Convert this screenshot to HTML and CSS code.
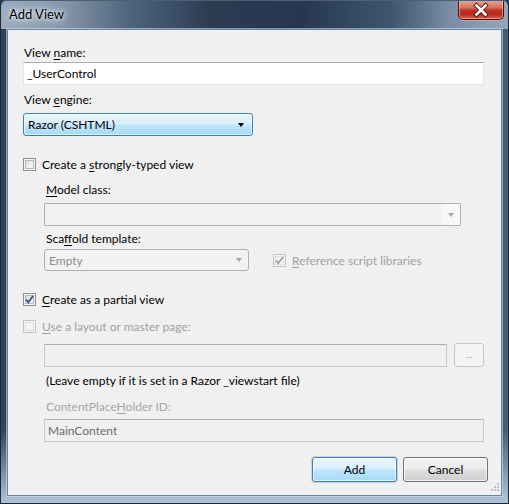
FILE: index.html
```html
<!DOCTYPE html>
<html>
<head>
<meta charset="utf-8">
<link rel="stylesheet" href="styles.css">
</head>
<body>
<div class="window">
  <div class="titlebar">
    <span class="title">Add View</span>
    <div class="close">
      <svg width="44" height="18" viewBox="0 0 44 18">
        <path d="M17.5 4.5 L26.5 13.5 M26.5 4.5 L17.5 13.5" stroke="#5a1a12" stroke-width="4.5" stroke-linecap="square" fill="none"/>
        <path d="M17.5 4.5 L26.5 13.5 M26.5 4.5 L17.5 13.5" stroke="#ffffff" stroke-width="2.6" stroke-linecap="square" fill="none"/>
      </svg>
    </div>
  </div>
  <div class="frame">
    <div class="client">
      <div class="label mt15">View <u>n</u>ame:</div>
      <div class="textbox mt2">_UserControl</div>
      <div class="label mt7">View <u>e</u>ngine:</div>
      <div class="combo hot mt6 w-engine"><span>Razor (CSHTML)</span><span class="arrow"></span></div>

      <div class="check-row mt21">
        <span class="cb"></span><span>Create a <u>s</u>trongly-typed view</span>
      </div>
      <div class="indent">
        <div class="label mt10"><u>M</u>odel class:</div>
        <div class="combo disabled mt6 w-model"><span></span><span class="drop"><span class="arrow grey"></span></span></div>
        <div class="label mt5">Sca<u>f</u>fold template:</div>
        <div class="row mt3">
          <div class="combo disabled small w-scaffold"><span class="greytext">Empty</span><span class="arrow grey"></span></div>
          <div class="check-row disabled-row ref">
            <span class="cb disabled checked">
              <svg width="11" height="11" viewBox="0 0 11 11"><path d="M2 5.5 L4.3 8.3 L9 2" stroke="#9a9a9a" stroke-width="1.6" fill="none"/></svg>
            </span>
            <span><u>R</u>eference script libraries</span>
          </div>
        </div>
      </div>

      <div class="check-row mt21">
        <span class="cb checked">
          <svg width="11" height="11" viewBox="0 0 11 11"><path d="M2 5.5 L4.3 8.3 L9 2" stroke="#3b4f83" stroke-width="1.8" fill="none"/></svg>
        </span>
        <span><u>C</u>reate as a partial view</span>
      </div>
      <div class="check-row disabled-row mt12">
        <span class="cb disabled"></span><span><u>U</u>se a layout or master page:</span>
      </div>
      <div class="indent">
        <div class="row browse-row mt9">
          <div class="textbox disabled w-layout"></div>
          <div class="btn-browse">...</div>
        </div>
        <div class="label note mt6">(Leave empty if it is set in a Razor _viewstart file)</div>
        <div class="label note greytext2 mt11">ContentPlace<u>H</u>older ID:</div>
        <div class="textbox disabled ro mt5">MainContent</div>
      </div>

      <div class="buttons mt15">
        <div class="btn default">Add</div>
        <div class="btn">Cancel</div>
      </div>
      <svg class="grip" width="12" height="12" viewBox="0 0 12 12">
        <g fill="#b8c2cc">
          <rect x="9" y="1" width="2" height="2"/>
          <rect x="6" y="4" width="2" height="2"/><rect x="9" y="4" width="2" height="2"/>
          <rect x="3" y="7" width="2" height="2"/><rect x="6" y="7" width="2" height="2"/><rect x="9" y="7" width="2" height="2"/>
        </g>
      </svg>
    </div>
  </div>
</div>
</body>
</html>
```
FILE: styles.css
```css
* { box-sizing: border-box; }
html, body { margin: 0; padding: 0; }
body {
  width: 509px;
  height: 504px;
  overflow: hidden;
  background: #2b3e54;
  font-family: Lato, "Noto Sans", sans-serif;
  font-size: 12px;
  color: #000;
}
.window {
  width: 509px;
  height: 504px;
  display: flex;
  flex-direction: column;
  border: 1px solid #1c2836;
  border-top-color: #4d5f72;
  border-radius: 6px 6px 0 0;
  overflow: hidden;
  background: linear-gradient(to right, #9aabbd 0px, #8698ab 60px, #4e647c 130px, #2a3c52 210px, #263850 300px, #3e556f 390px, #7a8fa5 450px, #95a7b9 509px);
}
.titlebar {
  height: 28px;
  display: flex;
  justify-content: space-between;
  align-items: flex-start;
  flex-shrink: 0;
}
.title {
  margin: 6px 0 0 8px;
  font-size: 13px;
  line-height: 15px;
  color: #000;
  text-shadow: 0 0 6px #e8eef4, 0 0 10px #dfe7ef, 0 0 3px #e8eef4;
}
.close {
  width: 46px;
  height: 20px;
  margin: -1px 4px 0 0;
  border: 1px solid #4a1510;
  border-top: none;
  border-radius: 0 0 5px 5px;
  background: linear-gradient(#e9a99a 0%, #d5705e 40%, #c0301f 55%, #b8281a 75%, #d26650 100%);
  box-shadow: inset 0 0 0 1px rgba(255, 220, 210, 0.45), 0 1px 0 rgba(200, 220, 240, 0.35);
  display: flex;
  align-items: center;
  justify-content: center;
}
.close svg { display: block; }
.frame {
  flex: 1;
  display: flex;
  padding: 0 6px 7px 6px;
  background:
    linear-gradient(to bottom, rgba(190, 210, 232, 0) 0px, rgba(190, 210, 232, 0) 400px, rgba(190, 210, 232, 0.85) 470px),
    linear-gradient(to right, #2c3f55 0px, #33485f 8px, #3b526c 495px, #46607d 509px);
}
.client {
  flex: 1;
  position: relative;
  background: #f0f0f0;
  border: 1px solid #6f8399;
  box-shadow: 0 0 0 1px rgba(215, 230, 245, 0.55);
  padding: 0 17px 0 15px;
  display: flex;
  flex-direction: column;
  align-items: flex-start;
}
.mt2 { margin-top: 2px; }
.mt3 { margin-top: 3px; }
.mt5 { margin-top: 5px; }
.mt6 { margin-top: 6px; }
.mt7 { margin-top: 7px; }
.mt9 { margin-top: 9px; }
.mt10 { margin-top: 10px; }
.mt11 { margin-top: 11px; }
.mt12 { margin-top: 12px; }
.mt15 { margin-top: 15px; }
.mt21 { margin-top: 21px; }

.label {
  line-height: 15px;
  height: 15px;
  padding-left: 1px;
  white-space: nowrap;
}
u { text-decoration: underline; text-underline-offset: 2px; text-decoration-thickness: 1px; }
.textbox {
  width: 461px;
  height: 23px;
  line-height: 21px;
  padding-left: 3px;
  background: #fff;
  border: 1px solid #e2e3ea;
  border-top-color: #abadb3;
  white-space: nowrap;
}
.textbox.disabled {
  background: #f0f0f0;
  border-color: #c9c9c9;
  border-top-color: #adadad;
}
.textbox.ro { width: 440px; color: #6d6d6d; }
.w-layout { width: 403px; }

.combo {
  height: 23px;
  border-radius: 3px;
  display: flex;
  align-items: center;
  justify-content: space-between;
  padding: 0 0 0 4px;
  white-space: nowrap;
}
.combo.hot {
  border: 1px solid #3c7fb1;
  background: linear-gradient(#eaf6fd 0%, #d9f0fc 48%, #bee6fd 52%, #a7d9f5 100%);
  box-shadow: inset 0 0 0 1px rgba(255, 255, 255, 0.6);
}
.combo.disabled {
  border: 1px solid #adb2b5;
  background: #f2f2f2;
}
.combo.small { height: 22px; }
.w-engine { width: 230px; padding-right: 4px; }
.w-model { width: 417px; border-radius: 1px; padding-right: 0; }
.w-scaffold { width: 205px; padding-right: 6px; }
.drop {
  width: 18px;
  height: 21px;
  background: #f8f8f8;
  display: flex;
  align-items: center;
  justify-content: center;
}
.arrow {
  width: 0;
  height: 0;
  border-left: 3.5px solid transparent;
  border-right: 3.5px solid transparent;
  border-top: 4px solid #000;
  margin-right: 4px;
}
.arrow.grey { border-top-color: #a5a5a5; margin-right: 0; }
.greytext { color: #8d8d8d; }
.greytext2 { color: #a6a6a6; }

.check-row {
  display: flex;
  align-items: center;
  height: 15px;
  line-height: 15px;
  white-space: nowrap;
}
.cb {
  width: 13px;
  height: 13px;
  margin-right: 6px;
  border: 1px solid #8e8f8f;
  background: linear-gradient(135deg, #d3d6db 0%, #f2f3f4 60%, #fbfbfb 100%);
  box-shadow: inset 0 0 0 1px #f4f4f4, inset 0 0 0 2px #b4b8bd;
  display: flex;
  align-items: center;
  justify-content: center;
}
.cb svg { display: block; }
.cb.disabled {
  border-color: #c4c4c4;
  background: #f4f4f4;
  box-shadow: inset 0 0 0 1px #f4f4f4, inset 0 0 0 2px #dcdcdc;
}
.disabled-row { color: #a0a0a0; }
.indent {
  margin-left: 21px;
  display: flex;
  flex-direction: column;
  align-items: flex-start;
}
.indent .label { padding-left: 2px; }
.row { display: flex; align-items: center; }
.ref { margin-left: 24px; }
.browse-row { align-items: flex-start; }
.browse-row .textbox { margin-top: 1px; }
.btn-browse {
  width: 30px;
  height: 24px;
  margin-left: 7px;
  border: 1px solid #c2c6c9;
  border-radius: 3px;
  background: #f4f4f4;
  color: #a8a8a8;
  font-size: 10px;
  line-height: 20px;
  text-align: center;
}
.note { padding-left: 3px; }

.buttons {
  align-self: flex-end;
  display: flex;
  gap: 6px;
  margin-right: -4px;
}
.btn {
  width: 85px;
  height: 25px;
  border: 1px solid #707070;
  border-radius: 3px;
  background: linear-gradient(#f2f2f2 0%, #ebebeb 48%, #dddddd 52%, #cfcfcf 100%);
  box-shadow: inset 0 0 0 1px rgba(255, 255, 255, 0.75);
  text-align: center;
  line-height: 23px;
}
.btn.default {
  border-color: #3c7fb1;
  background: linear-gradient(#eaf6fd 0%, #d9f0fc 48%, #bee6fd 52%, #a7d9f5 100%);
  box-shadow: inset 0 0 0 1px rgba(255, 255, 255, 0.7), 0 0 0 1px rgba(60, 127, 177, 0.25);
}
.grip {
  position: absolute;
  right: 1px;
  bottom: 1px;
}
```
